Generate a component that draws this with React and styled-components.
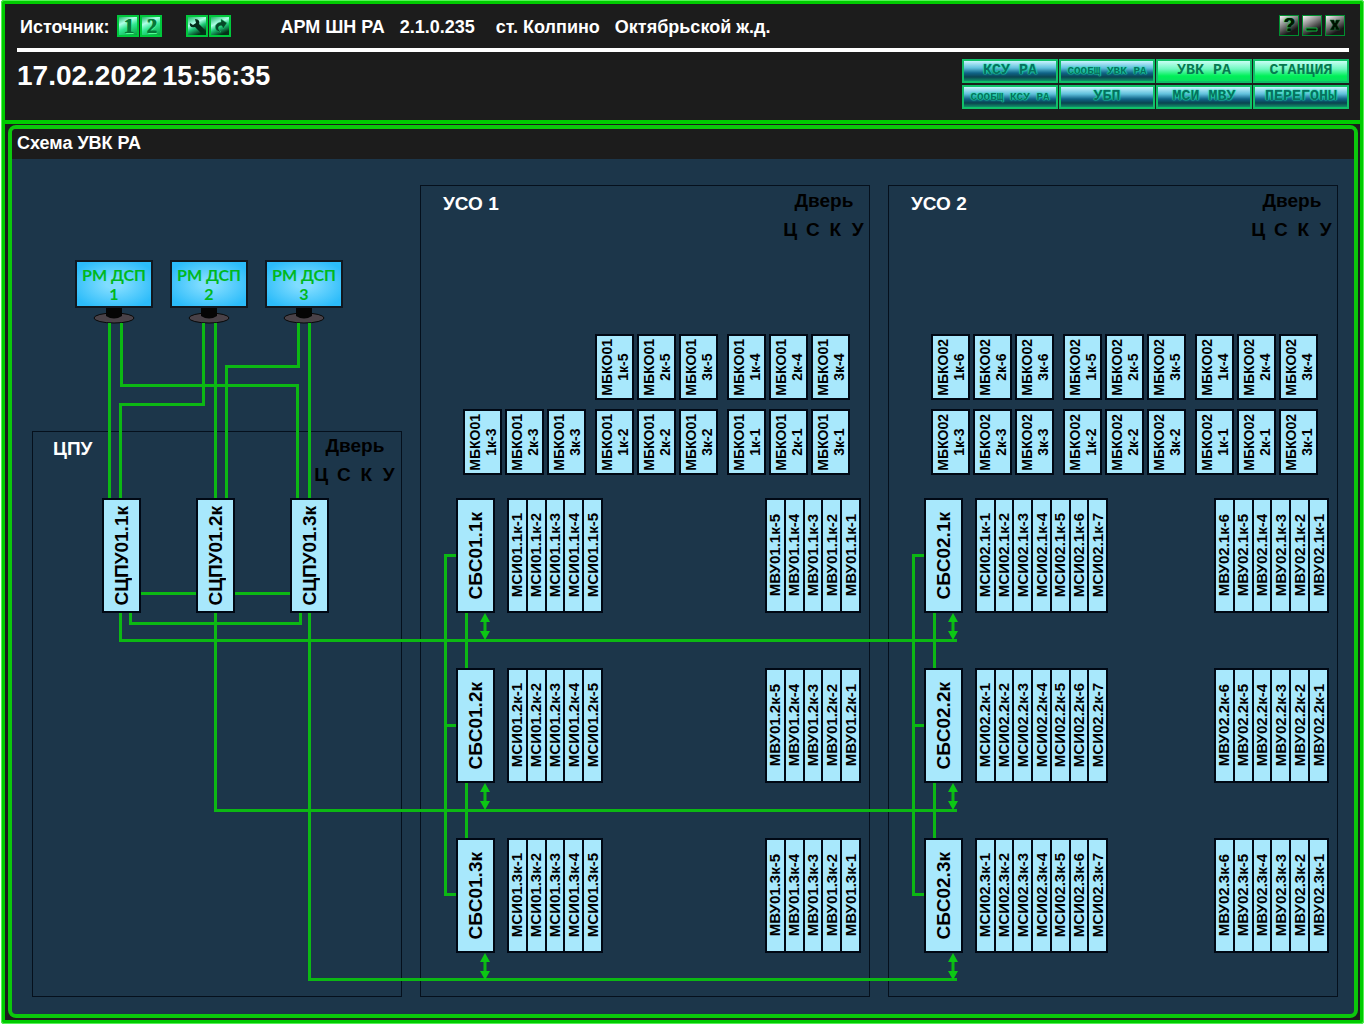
import React from 'react';
import styled, { createGlobalStyle } from 'styled-components';

const Global = createGlobalStyle`
  * { box-sizing: border-box; }
  body { margin: 0; background: #fff; font-family: "Liberation Sans", Arial, sans-serif; font-weight: 700; }
  h1, h2, p { margin: 0; font-size: inherit; font-weight: inherit; }
  button { font: inherit; padding: 0; cursor: pointer; }
`;

const Frame = styled.main`
  display: flex;
  flex-direction: column;
  min-height: 100vh;
  min-width: 1363px;
  margin: 0 1px;
  border: 4px solid #0c0;
  border-radius: 3px;
  background: #1c1c1c;
  outline: 1px solid #58f058;
  outline-offset: -1px;
`;

const Header = styled.header`
  height: 120px;
  padding: 11px 11px 0 12px;
  border-bottom: 4px solid #0c0;
  color: #fff;
`;

const TopRow = styled.div`
  display: flex;
  height: 37px;
  padding: 0 4px 0 3px;
  border-bottom: 4px solid #fff;
  line-height: 24px;
  font-size: 18px;
`;

const Pair = styled.div`
  display: flex;
  gap: 1px;
  margin-left: ${(p) => p.$before}px;
`;

const Caption = styled.h1`
  display: flex;
  gap: 21px;
  margin-left: 49px;
`;

const CaptionPart = styled.span`
  display: flex;
  gap: 15px;
`;

const WindowButtons = styled.div`
  display: flex;
  gap: 3px;
  margin-left: auto;
`;

const IconButton = styled.button`
  width: 22px;
  height: 22px;
  border: 2px solid #00c83c;
  background: ${(p) =>
    p.$source
      ? 'linear-gradient(155deg, #20b868, #b0ffe8 30%, #30e890 55%, #08a040)'
      : 'linear-gradient(155deg, #20b868, #b0ffe8 35%, #20c878 55%, #043018 85%)'};
  color: #067838;
  font-family: "Liberation Serif", "Times New Roman", serif;
  font-size: 20px;
  line-height: 18px;
  text-shadow: 1px 0 0 #067838, 1px 1px 0 #50ff90;
  svg { display: block; width: 18px; height: 18px; }
`;

const WindowButton = styled.button`
  width: 20px;
  height: 21px;
  border: 1px solid #009030;
  background: linear-gradient(150deg, #f4f4f4, #909090 35%, #181818 75%);
  color: #001800;
  font-size: 18px;
  line-height: 19px;
  text-shadow: 1px 0 0 #001800, 0 0 2px #10e050, 0 0 1px #10e050;
  svg { display: block; width: 18px; height: 19px; }
`;

const BottomRow = styled.div`
  display: flex;
  justify-content: space-between;
`;

const Clock = styled.p`
  display: flex;
  gap: 5px;
  padding-top: 8px;
  font-size: 28px;
  line-height: 32px;
  span { font-size: 27px; }
`;

const Nav = styled.nav`
  display: grid;
  grid-template-columns: repeat(4, 96px);
  gap: 2px 1px;
  padding-top: 7px;
`;

const NavButton = styled.button`
  height: 24px;
  border: 2px solid #10c068;
  font-family: "Liberation Mono", "Courier New", monospace;
  font-size: ${(p) => (p.$small ? 11 : 15)}px;
  line-height: 20px;
  white-space: nowrap;
  color: ${(p) => (p.$lit ? '#067a50' : '#087060')};
  text-shadow: ${(p) => (p.$lit ? 'none' : '0 0 1px #20f0b0, 0 0 1px #20e8a8, 0 0 2px #18d8a0')};
  background: ${(p) =>
    p.$lit
      ? 'linear-gradient(#c8fff4, #70f8c0 40%, #00f058 75%, #08e060)'
      : 'linear-gradient(#c8f4ff, #60c0dc 35%, #106488 60%, #0a4450 80%, #109068)'};
`;

const Panel = styled.section`
  flex: 1;
  margin: 1px 2px 2px 3px;
  border: 4px solid #0cc80c;
  border-radius: 8px;
  background: #1c364a;
  overflow: hidden;
`;

const PanelTitle = styled.h2`
  height: 30px;
  padding: 0 5px;
  background: #1c1c1c;
  color: #fff;
  font-size: 18px;
  line-height: 28px;
`;

const Canvas = styled.div`
  position: relative;
  display: flex;
  gap: 18px;
  width: 1341px;
  height: 855px;
  padding: 26px 0 0 20px;
`;

const Wires = styled.svg`
  position: absolute;
  left: 0;
  top: 0;
  width: 1341px;
  height: 855px;
  fill: none;
  stroke: #0cb814;
  stroke-width: 3;
`;

const CpuColumn = styled.div`
  display: flex;
  flex-direction: column;
  justify-content: space-between;
  width: 370px;
  height: 812px;
  padding-top: 75px;
`;

const Stations = styled.div`
  display: flex;
  gap: 17px;
  padding-left: 43px;
`;

const Station = styled.div`
  display: flex;
  flex-direction: column;
  align-items: center;
  width: 78px;
  svg { display: block; width: 44px; height: 16px; }
`;

const Screen = styled.div`
  width: 78px;
  height: 48px;
  border: 2px solid #101820;
  padding-top: 3px;
  background: radial-gradient(ellipse, #80dcff 15%, #2cbcfa 85%);
  color: #00b820;
  font-family: Lato, "Noto Sans", sans-serif;
  font-size: 16px;
  line-height: 19px;
  text-align: center;
  white-space: nowrap;
`;

const Cabinet = styled.section`
  display: flex;
  flex-direction: column;
  flex: none;
  width: ${(p) => (p.$wide ? '450px' : '370px')};
  height: ${(p) => (p.$wide ? '812px' : '566px')};
  border: 1px solid #05101c;
`;

const CabinetHead = styled.div`
  display: flex;
  justify-content: space-between;
  height: ${(p) => (p.$tall ? 148 : 66)}px;
  padding: ${(p) => (p.$tall ? '3px 0 0 22px' : '2px 1px 0 20px')};
  font-size: 19px;
  line-height: 24px;
  color: #fff;
  h2 { padding-top: 3px; }
`;

const Door = styled.div`
  width: 90px;
  color: #000;
  text-align: center;
`;

const DoorKeys = styled.div`
  display: grid;
  grid-template-columns: repeat(4, 1fr);
  padding-top: 5px;
`;

const CpuModules = styled.div`
  display: flex;
  gap: 55px;
  padding-left: 69px;
`;

const Vertical = styled.span`
  writing-mode: vertical-rl;
  transform: rotate(180deg);
  white-space: nowrap;
  text-align: center;
`;

const Block = styled.div`
  position: relative;
  display: flex;
  align-items: center;
  justify-content: center;
  flex: none;
  width: 39px;
  height: ${(p) => (p.$short ? 66 : 115)}px;
  border: 2px solid #000814;
  background: #a8e8fc;
  color: #000;
  font-size: ${(p) => (p.$short ? 14 : 19)}px;
  line-height: ${(p) => (p.$short ? 16 : 24)}px;
`;

const ControlRow = styled.div`
  display: flex;
  justify-content: flex-end;
  gap: 9px;
  height: 75px;
  padding-right: 19px;
`;

const ControlGroup = styled.div`
  display: flex;
  gap: 3px;
`;

const Channels = styled.div`
  display: flex;
  flex-direction: column;
  gap: 55px;
  padding: 14px 8px 0 35px;
`;

const Channel = styled.div`
  display: flex;
  justify-content: space-between;
`;

const ChannelLead = styled.div`
  display: flex;
  gap: 12px;
`;

const Strip = styled.div`
  position: relative;
  display: flex;
  gap: 2px;
  width: ${(p) => p.$width}px;
  height: 115px;
  padding: 2px;
  background: #000814;
`;

const Slot = styled.div`
  display: flex;
  flex: 1 1 0;
  align-items: center;
  justify-content: center;
  min-width: 0;
  background: #a8e8fc;
  font-size: 15px;
  line-height: 16px;
`;

const STRIP_WIDTH = { 5: 96, 6: 115, 7: 133 };
const CHANNELS = [1, 2, 3];

const NAV = [
  { label: 'КСУ РА' },
  { label: 'СООБЩ УВК РА', small: true },
  { label: 'УВК РА', lit: true },
  { label: 'СТАНЦИЯ', lit: true },
  { label: 'СООБЩ КСУ РА', small: true },
  { label: 'УБП' },
  { label: 'МСИ МВУ' },
  { label: 'ПЕРЕГОНЫ' },
];

const CABINETS = [
  { id: '01', title: 'УСО 1', rows: [[5, 4], [3, 2, 1]], msi: [1, 2, 3, 4, 5], mvu: [5, 4, 3, 2, 1] },
  { id: '02', title: 'УСО 2', rows: [[6, 5, 4], [3, 2, 1]], msi: [1, 2, 3, 4, 5, 6, 7], mvu: [6, 5, 4, 3, 2, 1] },
];

function DoorPanel() {
  return (
    <Door>
      Дверь
      <DoorKeys>
        {['Ц', 'С', 'К', 'У'].map((k) => <span key={k}>{k}</span>)}
      </DoorKeys>
    </Door>
  );
}

function Bank({ prefix, slots }) {
  return (
    <Strip $width={STRIP_WIDTH[slots.length]}>
      {slots.map((n) => (
        <Slot key={n}><Vertical>{prefix}-{n}</Vertical></Slot>
      ))}
    </Strip>
  );
}

function UsoCabinet({ id, title, rows, msi, mvu }) {
  return (
    <Cabinet $wide>
      <CabinetHead $tall><h2>{title}</h2><DoorPanel /></CabinetHead>
      {rows.map((row) => (
        <ControlRow key={row[0]}>
          {row.map((slot) => (
            <ControlGroup key={slot}>
              {CHANNELS.map((c) => (
                <Block key={c} $short><Vertical>МБКО{id}<br />{c}к-{slot}</Vertical></Block>
              ))}
            </ControlGroup>
          ))}
        </ControlRow>
      ))}
      <Channels>
        {CHANNELS.map((c) => (
          <Channel key={c}>
            <ChannelLead>
              <Block><Vertical>СБС{id}.{c}к</Vertical></Block>
              <Bank prefix={`МСИ${id}.${c}к`} slots={msi} />
            </ChannelLead>
            <Bank prefix={`МВУ${id}.${c}к`} slots={mvu} />
          </Channel>
        ))}
      </Channels>
    </Cabinet>
  );
}

function Wiring() {
  return (
    <Wires viewBox="12 159 1341 855" aria-hidden="true">
      <path d="M109.5 323V500M121.5 323V385.5H297.5V500M203.5 323V404.5H120.5V500M215.5 323V500M298.5 323V366.5H226.5V500M309.5 323V500" />
      <path d="M139 593.5H197M234 593.5H292M130.5 612V623.5H300.5V612" />
      <path d="M120.5 612V640.5H957M215.5 612V810.5H957M309.5 612V979.5H957" />
      {[0, 468].map((dx) => (
        <g key={dx} transform={`translate(${dx} 0)`}>
          <path d="M457 555.5H445.5V894.5H457M445.5 725.5H457M466.5 612V669M466.5 782V839" />
          {[613, 783, 953].map((y) => (
            <g key={y} transform={`translate(485 ${y})`}>
              <path d="M0 4V23" />
              <path d="M0 0L5 9H-5ZM0 27L5 18H-5Z" fill="#0cc814" stroke="none" />
            </g>
          ))}
        </g>
      ))}
    </Wires>
  );
}

export default function App() {
  return (
    <>
      <Global />
      <Frame>
        <Header>
          <TopRow>
            <span>Источник:</span>
            <Pair $before={8}>
              <IconButton $source aria-label="Источник 1">1</IconButton>
              <IconButton $source aria-label="Источник 2">2</IconButton>
            </Pair>
            <Pair $before={24}>
              <IconButton aria-label="Настройка">
                <svg viewBox="0 0 18 18"><path d="M2 6l3 2 3-2-1-4c4 0 5 3 4 5l6 6-3 4-7-7c-4 1-6-1-5-4z" fill="#042c18" /></svg>
              </IconButton>
              <IconButton aria-label="Обновить">
                <svg viewBox="0 0 18 18"><path d="M10 2l6 4-4 6-1-3c-4-1-5 3-1 6-7 0-8-9 0-10z" fill="#064828" stroke="#20d070" strokeWidth="0.5" /></svg>
              </IconButton>
            </Pair>
            <Caption>
              <CaptionPart><span>АРМ ШН РА</span><span>2.1.0.235</span></CaptionPart>
              <CaptionPart><span>ст. Колпино</span><span>Октябрьской ж.д.</span></CaptionPart>
            </Caption>
            <WindowButtons>
              <WindowButton aria-label="Справка">?</WindowButton>
              <WindowButton aria-label="Свернуть">
                <svg viewBox="0 0 18 19"><path d="M3 12h11v3H3z" fill="#020" stroke="#10b040" /></svg>
              </WindowButton>
              <WindowButton aria-label="Закрыть">
                <svg viewBox="0 0 18 19"><path d="M4 4h4l1 3 1-3h4l-3 5 3 5h-4l-1-3-1 3H4l3-5z" fill="#010" stroke="#0a6828" strokeWidth="0.5" /></svg>
              </WindowButton>
            </WindowButtons>
          </TopRow>
          <BottomRow>
            <Clock>17.02.2022<span>15:56:35</span></Clock>
            <Nav>
              {NAV.map((n) => (
                <NavButton key={n.label} $small={n.small} $lit={n.lit}>{n.label}</NavButton>
              ))}
            </Nav>
          </BottomRow>
        </Header>
        <Panel>
          <PanelTitle>Схема УВК РА</PanelTitle>
          <Canvas>
            <Wiring />
            <CpuColumn>
              <Stations>
                {CHANNELS.map((n) => (
                  <Station key={n}>
                    <Screen>РМ ДСП<br />{n}</Screen>
                    <svg viewBox="0 0 44 16">
                      <ellipse cx="22" cy="10" rx="20" ry="5" fill="#4a4248" stroke="#080808" />
                      <path d="M14 0h16v8q-8 5-16 0z" fill="#050505" />
                    </svg>
                  </Station>
                ))}
              </Stations>
              <Cabinet>
                <CabinetHead><h2>ЦПУ</h2><DoorPanel /></CabinetHead>
                <CpuModules>
                  {CHANNELS.map((c) => (
                    <Block key={c}><Vertical>СЦПУ01.{c}к</Vertical></Block>
                  ))}
                </CpuModules>
              </Cabinet>
            </CpuColumn>
            {CABINETS.map((c) => <UsoCabinet key={c.id} {...c} />)}
          </Canvas>
        </Panel>
      </Frame>
    </>
  );
}
